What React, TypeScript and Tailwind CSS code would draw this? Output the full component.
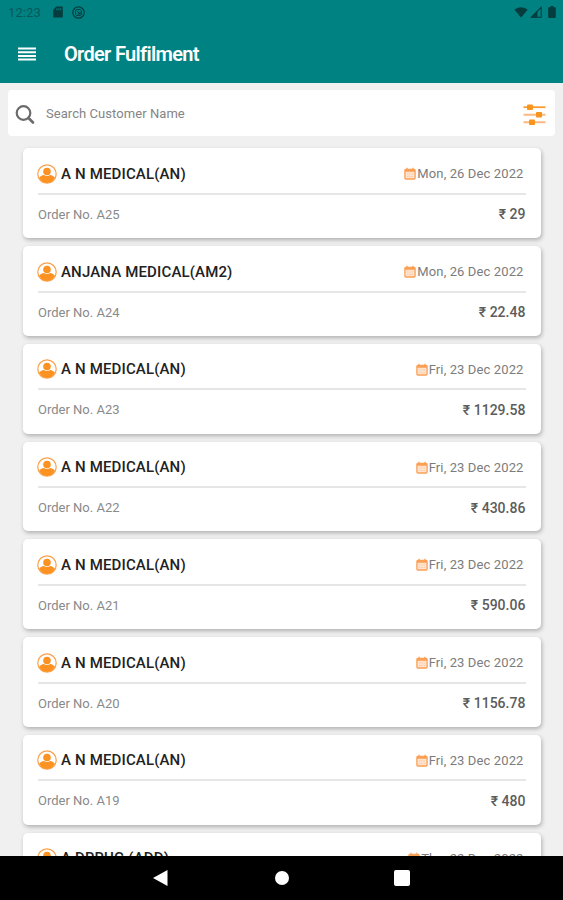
type Order = {
  customer: string;
  date: string;
  no?: string;
  amount?: string;
};

const orders: Order[] = [
  { no: 'A25', customer: 'A N MEDICAL(AN)', date: 'Mon, 26 Dec 2022', amount: '29' },
  { no: 'A24', customer: 'ANJANA MEDICAL(AM2)', date: 'Mon, 26 Dec 2022', amount: '22.48' },
  { no: 'A23', customer: 'A N MEDICAL(AN)', date: 'Fri, 23 Dec 2022', amount: '1129.58' },
  { no: 'A22', customer: 'A N MEDICAL(AN)', date: 'Fri, 23 Dec 2022', amount: '430.86' },
  { no: 'A21', customer: 'A N MEDICAL(AN)', date: 'Fri, 23 Dec 2022', amount: '590.06' },
  { no: 'A20', customer: 'A N MEDICAL(AN)', date: 'Fri, 23 Dec 2022', amount: '1156.78' },
  { no: 'A19', customer: 'A N MEDICAL(AN)', date: 'Fri, 23 Dec 2022', amount: '480' },
  { customer: 'A DRRUG (ADD)', date: 'Thu, 22 Dec 2022' },
];

function StatusBar() {
  return (
    <div className="flex h-[24px] items-center pl-[8px] pr-[7px] text-[#063c3e]">
      <span className="w-[45px] text-[13px] leading-none tracking-[0.1px] text-[#07585a]">12:23</span>
      <svg className="h-[12px] w-[10px]" viewBox="0 0 10 12" fill="currentColor">
        <path fillRule="evenodd" d="M3.4.4H9a.8.8 0 0 1 .8.8v9.6a.8.8 0 0 1-.8.8H1a.8.8 0 0 1-.8-.8V3.7zM3.4 2.2v2h1v-2zM5.3 2.2v2h1v-2zM7.2 2.2v2h1v-2z" />
      </svg>
      <svg className="ml-[9px] h-[13px] w-[13px]" viewBox="0 0 13 13" fill="none" stroke="currentColor">
        <circle cx="6.5" cy="6.5" r="5.7" strokeWidth="1.2" />
        <path d="M3.6 8.8V5.2a1.6 1.6 0 0 1 1.6-1.6h3.6M9.4 4.6v3.2a1.6 1.6 0 0 1-1.6 1.6H4.2" strokeWidth="1" />
        <path d="M5 5l3 3M8 5.8V8H5.8" strokeWidth="1" />
      </svg>
      <svg className="ml-auto h-[11px] w-[14px]" viewBox="0 0 14 11" fill="currentColor">
        <path d="M7 10.8L.4 2.7C2.2 1.1 4.5.2 7 .2s4.8.9 6.6 2.5z" />
      </svg>
      <svg className="ml-[2px] h-[12px] w-[12px]" viewBox="0 0 12 12">
        <path d="M11.2 1.3v10H1.3z" fill="none" stroke="currentColor" strokeWidth="1.1" />
        <path d="M7.5 5v6.5H1z" fill="currentColor" />
      </svg>
      <svg className="ml-[6px] h-[12px] w-[8px]" viewBox="0 0 8 12" fill="currentColor">
        <path d="M2.5 0h3v1.2H7a.8.8 0 0 1 .8.8v9a.9.9 0 0 1-.9.9H1.1A.9.9 0 0 1 .2 11V2A.8.8 0 0 1 1 1.2h1.5z" />
      </svg>
    </div>
  );
}

function Header() {
  return (
    <header className="h-[83px] shrink-0 bg-[#008282]">
      <StatusBar />
      <div className="flex h-[59px] items-center pl-[18px]">
        <button aria-label="Menu">
          <svg className="h-[14px] w-[18px]" viewBox="0 0 18 14" stroke="#fff" strokeWidth="2">
            <path d="M0 1.5h18M0 5.2h18M0 8.9h18M0 12.6h18" />
          </svg>
        </button>
        <h1 className="ml-[28px] pt-px whitespace-nowrap text-[20px] font-semibold leading-none tracking-[-0.68px] text-white">Order Fulfilment</h1>
      </div>
    </header>
  );
}

function SearchBar() {
  return (
    <div className="mx-[8px] mt-[7px] flex h-[46px] shrink-0 items-center rounded-[4px] bg-white pl-[7px] pr-[9px]">
      <svg className="mt-[3px] h-[20px] w-[20px]" viewBox="0 0 20 20" fill="none" stroke="#6b6b6b" strokeLinecap="round">
        <circle cx="8.5" cy="8" r="6.8" strokeWidth="2.2" />
        <path d="M13.5 13l4.5 4.5" strokeWidth="2.6" />
      </svg>
      <span className="ml-[11px] text-[13px] leading-none tracking-[0.06px] text-[#858585]">Search Customer Name</span>
      <svg className="ml-auto mt-[3px] h-[22px] w-[23px]" viewBox="0 0 23 22">
        <path d="M.5 3.2h22" stroke="#f99a32" strokeWidth="1.8" />
        <path d="M.5 10.7h22M.5 18.3h22" stroke="#fbb980" strokeWidth="2" />
        <rect x="4" y=".5" width="6" height="5.5" rx="1" fill="#f7941d" />
        <rect x="13" y="8" width="6" height="5.5" rx="1" fill="#f7941d" />
        <rect x="6" y="15.5" width="6" height="5.5" rx="1" fill="#f7941d" />
      </svg>
    </div>
  );
}

function PersonIcon() {
  return (
    <svg className="-ml-px h-[20px] w-[20px] shrink-0" viewBox="0 0 20 20">
      <circle cx="10" cy="10" r="9.2" fill="#fff" stroke="#fba04a" strokeWidth="1.2" />
      <circle cx="10" cy="7.5" r="3.8" fill="#fb9221" />
      <path d="M2.2 13.2c1.4-1.4 3-2.1 4.6-2.3 1.9 1.5 4.500 1.5 6.400 0 1.600.2 3.200.9 4.600 2.3A8.700 8.700 0 0 1 10 19a8.700 8.700 0 0 1-7.800-5.800z" fill="#fb9221" />
    </svg>
  );
}

function CalendarIcon() {
  return (
    <svg className="h-[13px] w-[12px] shrink-0" viewBox="0 0 12 13">
      <rect x=".9" y="2.3" width="10.2" height="9.7" rx="1" fill="#fee3cf" stroke="#fba055" strokeWidth="1.3" />
      <path d="M1 3.7h10" stroke="#fba055" strokeWidth="2.2" />
      <path d="M3 .7v2M9 .7v2" stroke="#fba055" strokeWidth="1.3" />
      <path d="M3 7h6M3 9.5h6" stroke="#fdcba8" strokeWidth="1.1" strokeDasharray="1.4 .9" />
    </svg>
  );
}

function OrderCard({ order }: { order: Order }) {
  return (
    <div className="h-[89.75px] shrink-0 rounded-[5px] bg-white px-[15px] shadow-[1px_2px_4px_rgba(0,0,0,0.27)]">
      <div className="flex h-[46.5px] items-center border-b-2 border-[#e6e6e6] pt-[6.5px]">
        <PersonIcon />
        <span className="ml-[4px] pt-px whitespace-nowrap text-[15px] font-medium leading-none tracking-[0.15px] text-[#222]">{order.customer}</span>
        <div className="ml-auto flex items-center pr-[2px]">
          <CalendarIcon />
          <span className="ml-px whitespace-nowrap text-[13px] leading-none tracking-[0.12px] text-[#7c7c7c]">{order.date}</span>
        </div>
      </div>
      {order.no && (
        <div className="flex h-[39px] items-center justify-between leading-none">
          <span className="text-[13px] text-[#8a8a8a]">Order No. {order.no}</span>
          <span className="text-[14px] font-medium tracking-[0.03px] text-[#5c5c5c]">₹ {order.amount}</span>
        </div>
      )}
    </div>
  );
}

function NavBar() {
  return (
    <nav className="flex h-[44px] shrink-0 items-center bg-black pl-[152px]">
      <svg className="h-[18px] w-[16px]" viewBox="0 0 16 18" fill="#fff">
        <path d="M15.5 1v16L1 9z" />
      </svg>
      <span className="ml-[107px] h-[14px] w-[14px] rounded-full bg-white" />
      <span className="ml-[105px] h-[16px] w-[16px] rounded-[2px] bg-white" />
    </nav>
  );
}

export default function App() {
  return (
    <div className="flex h-screen w-full flex-col overflow-hidden bg-[#f0f0f0] font-['Roboto',sans-serif]">
      <Header />
      <SearchBar />
      <main className="flex min-h-0 flex-1 flex-col gap-[8px] overflow-hidden pl-[23px] pr-[22.5px] pt-[12.3px]">
        {orders.map((order, i) => (
          <OrderCard key={i} order={order} />
        ))}
      </main>
      <NavBar />
    </div>
  );
}
